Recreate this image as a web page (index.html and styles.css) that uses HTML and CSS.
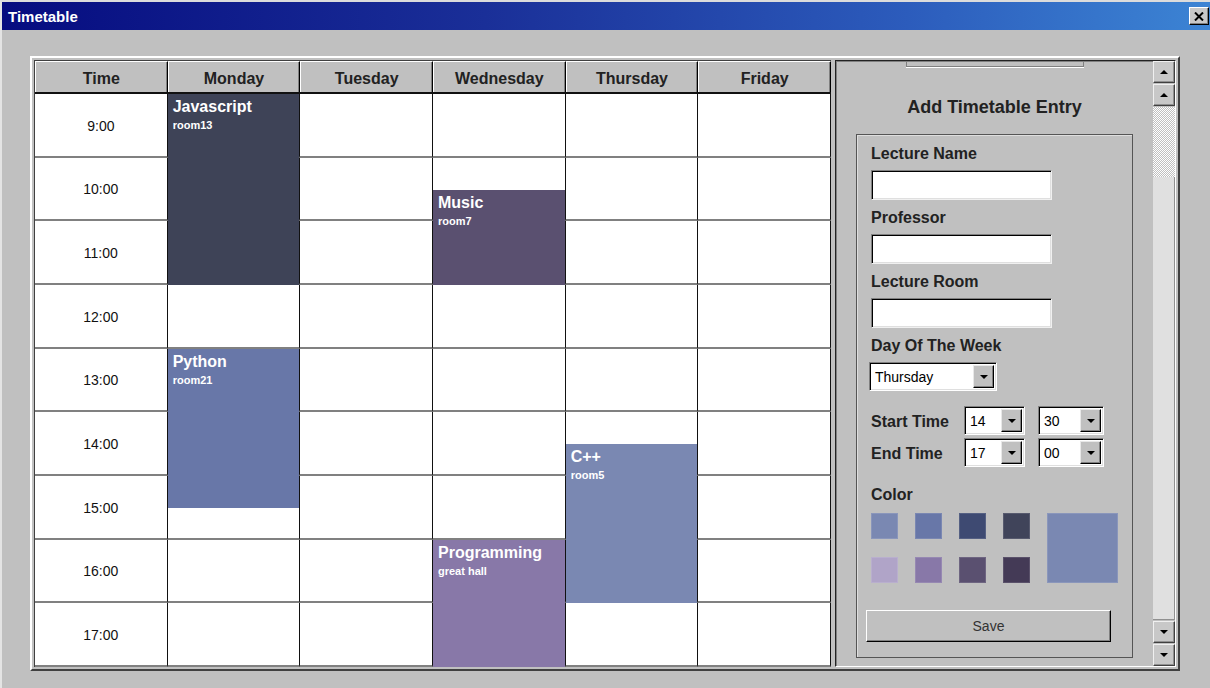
FILE: index.html
```html
<!DOCTYPE html>
<html lang="en">
<head>
    <meta charset="UTF-8">
    <meta name="viewport" content="width=device-width, initial-scale=1.0">
    <title>Timetable</title>
    <link rel="stylesheet" href="styles.css">
</head>
<body>

<div class="window">
    <div class="titlebar">
        <span class="title">Timetable</span>
        <button class="close-btn" aria-label="Close">
            <svg width="10" height="9" viewBox="0 0 10 9"><path d="M1 0.5 L9 8.5 M9 0.5 L1 8.5" stroke="#000" stroke-width="2"/></svg>
        </button>
    </div>

    <div class="client">
        <div class="frame">

            <!-- Tabla del horario -->
            <div class="timetable">
                <div class="head">
                    <div class="head-cell">Time</div>
                    <div class="head-cell">Monday</div>
                    <div class="head-cell">Tuesday</div>
                    <div class="head-cell">Wednesday</div>
                    <div class="head-cell">Thursday</div>
                    <div class="head-cell">Friday</div>
                </div>
                <div class="body">
                    <div class="cells">
                        <div class="cell time">9:00</div><div class="cell"></div><div class="cell"></div><div class="cell"></div><div class="cell"></div><div class="cell"></div>
                        <div class="cell time">10:00</div><div class="cell"></div><div class="cell"></div><div class="cell"></div><div class="cell"></div><div class="cell"></div>
                        <div class="cell time">11:00</div><div class="cell"></div><div class="cell"></div><div class="cell"></div><div class="cell"></div><div class="cell"></div>
                        <div class="cell time">12:00</div><div class="cell"></div><div class="cell"></div><div class="cell"></div><div class="cell"></div><div class="cell"></div>
                        <div class="cell time">13:00</div><div class="cell"></div><div class="cell"></div><div class="cell"></div><div class="cell"></div><div class="cell"></div>
                        <div class="cell time">14:00</div><div class="cell"></div><div class="cell"></div><div class="cell"></div><div class="cell"></div><div class="cell"></div>
                        <div class="cell time">15:00</div><div class="cell"></div><div class="cell"></div><div class="cell"></div><div class="cell"></div><div class="cell"></div>
                        <div class="cell time">16:00</div><div class="cell"></div><div class="cell"></div><div class="cell"></div><div class="cell"></div><div class="cell"></div>
                        <div class="cell time">17:00</div><div class="cell"></div><div class="cell"></div><div class="cell"></div><div class="cell"></div><div class="cell"></div>
                    </div>
                    <div class="events">
                        <div class="event" style="grid-column: 2; grid-row: 1 / 7; background: #3e4357;">
                            <div class="event-name">Javascript</div>
                            <div class="event-room">room13</div>
                        </div>
                        <div class="event" style="grid-column: 4; grid-row: 4 / 7; background: #5a5070;">
                            <div class="event-name">Music</div>
                            <div class="event-room">room7</div>
                        </div>
                        <div class="event" style="grid-column: 2; grid-row: 9 / 14; background: #6877a8;">
                            <div class="event-name">Python</div>
                            <div class="event-room">room21</div>
                        </div>
                        <div class="event" style="grid-column: 5; grid-row: 12 / 17; background: #7a88b2;">
                            <div class="event-name">C++</div>
                            <div class="event-room">room5</div>
                        </div>
                        <div class="event" style="grid-column: 4; grid-row: 15 / 19; background: #8878a8;">
                            <div class="event-name">Programming</div>
                            <div class="event-room">great hall</div>
                        </div>
                    </div>
                </div>
            </div>

            <!-- Panel para agregar entradas -->
            <div class="panel">
                <div class="panel-content">
                    <div class="grip"></div>
                    <h2>Add Timetable Entry</h2>
                    <div class="group">
                        <label class="field-label">Lecture Name</label>
                        <input type="text" class="text-input">

                        <label class="field-label">Professor</label>
                        <input type="text" class="text-input">

                        <label class="field-label">Lecture Room</label>
                        <input type="text" class="text-input">

                        <label class="field-label">Day Of The Week</label>
                        <div class="select day">
                            <span class="select-value">Thursday</span>
                            <span class="drop"><i class="tri-down"></i></span>
                        </div>

                        <div class="time-row first">
                            <span class="time-label">Start Time</span>
                            <div class="select hour">
                                <span class="select-value">14</span>
                                <span class="drop"><i class="tri-down"></i></span>
                            </div>
                            <div class="select minute">
                                <span class="select-value">30</span>
                                <span class="drop"><i class="tri-down"></i></span>
                            </div>
                        </div>
                        <div class="time-row">
                            <span class="time-label">End Time</span>
                            <div class="select hour">
                                <span class="select-value">17</span>
                                <span class="drop"><i class="tri-down"></i></span>
                            </div>
                            <div class="select minute">
                                <span class="select-value">00</span>
                                <span class="drop"><i class="tri-down"></i></span>
                            </div>
                        </div>

                        <label class="field-label color-label">Color</label>
                        <div class="colors">
                            <div class="swatches">
                                <div class="swatch" style="background: #7a88b2;"></div>
                                <div class="swatch" style="background: #6877a8;"></div>
                                <div class="swatch" style="background: #3e4a72;"></div>
                                <div class="swatch" style="background: #40445a;"></div>
                                <div class="swatch" style="background: #b0a4c8;"></div>
                                <div class="swatch" style="background: #8878a8;"></div>
                                <div class="swatch" style="background: #5a5070;"></div>
                                <div class="swatch" style="background: #443a56;"></div>
                            </div>
                            <div class="swatch-big" style="background: #7a88b2;"></div>
                        </div>

                        <button class="save">Save</button>
                    </div>
                </div>
                <div class="scrollbar">
                    <div class="sb-btn"><i class="tri-up"></i></div>
                    <div class="sb-btn"><i class="tri-up"></i></div>
                    <div class="sb-track"></div>
                    <div class="sb-thumb"></div>
                    <div class="sb-btn"><i class="tri-down"></i></div>
                    <div class="sb-btn"><i class="tri-down"></i></div>
                </div>
            </div>

        </div>
    </div>
</div>

</body>
</html>
```

FILE: styles.css
```css
* {
    box-sizing: border-box;
}

body {
    margin: 0;
    padding: 0;
    background-color: #c0c0c0;
    font-family: 'Liberation Sans', Arial, sans-serif;
    color: #222;
}

.window {
    width: 1210px;
    height: 688px;
    display: flex;
    flex-direction: column;
    border-top: 2px solid #dcdcdc;
    border-left: 2px solid #e4e4e4;
    background-color: #c0c0c0;
}

/* Barra de titulo */
.titlebar {
    height: 28px;
    display: flex;
    align-items: center;
    justify-content: space-between;
    padding: 0 1px 0 6px;
    background: linear-gradient(to right, #060c80 0%, #1a2f98 40%, #2c5cbc 75%, #3c84d4 100%);
}

.title {
    color: #fff;
    font-weight: bold;
    font-size: 15px;
}

.close-btn {
    width: 20px;
    height: 18px;
    padding: 0;
    display: flex;
    align-items: center;
    justify-content: center;
    background-color: #c8c8c8;
    border: 1px solid;
    border-color: #fff #000 #000 #fff;
    box-shadow: inset -1px -1px #808080;
}

.client {
    flex: 1;
    padding: 26px 30px 17px 28px;
    display: flex;
}

.frame {
    flex: 1;
    display: flex;
    gap: 4px;
    padding: 2px;
    border: 2px solid;
    border-color: #fff #404040 #404040 #fff;
}

/* Tabla */
.timetable {
    flex: 0 0 797px;
    display: flex;
    flex-direction: column;
    border-top: 1px solid #404040;
    border-left: 1px solid #404040;
}

.head {
    height: 33px;
    display: grid;
    grid-template-columns: repeat(6, 1fr);
    border-bottom: 2px solid #111;
}

.head-cell {
    display: flex;
    align-items: center;
    justify-content: center;
    padding-top: 3px;
    font-size: 16px;
    font-weight: bold;
    color: #222;
    border: 1px solid;
    border-color: #fff #000 #000 #fff;
    border-bottom: none;
    box-shadow: inset -1px 0 #808080;
}

.body {
    flex: 1;
    display: grid;
    background-color: #fff;
}

.cells,
.events {
    grid-area: 1 / 1;
    display: grid;
    grid-template-columns: repeat(6, 1fr);
}

.cells {
    grid-template-rows: repeat(9, 1fr);
}

.events {
    grid-template-rows: repeat(18, 1fr);
}

.cell {
    border-right: 1px solid #111;
    border-bottom: 2px solid #808080;
}

.cell.time {
    display: flex;
    align-items: center;
    justify-content: center;
    padding-top: 2px;
    font-size: 14px;
    color: #111;
}

.event {
    margin-right: 1px;
    padding: 4px 5px;
    color: #fff;
}

.event-name {
    font-size: 16px;
    line-height: 18px;
    font-weight: bold;
}

.event-room {
    margin-top: 2px;
    font-size: 11px;
    line-height: 14px;
    font-weight: bold;
}

/* Panel derecho */
.panel {
    flex: 1;
    display: flex;
    border: 1px solid;
    border-color: #222 #fff #fff #222;
    box-shadow: inset 1px 1px #808080;
}

.panel-content {
    flex: 1;
    display: flex;
    flex-direction: column;
}

.grip {
    width: 178px;
    height: 6px;
    margin: 0 auto;
    border: 1px solid #808080;
    border-top: none;
    box-shadow: 0 1px #fff;
}

.panel-content h2 {
    margin: 29px 0 16px;
    text-align: center;
    font-size: 18px;
    line-height: 22px;
    color: #222;
}

.group {
    margin: 0 20px;
    padding: 10px 14px 15px;
    border: 1px solid #555;
    box-shadow: inset 1px 1px #dedede;
    display: flex;
    flex-direction: column;
    align-items: flex-start;
}

.field-label {
    display: block;
    font-size: 16px;
    line-height: 18px;
    font-weight: bold;
    color: #222;
}

.text-input + .field-label {
    margin-top: 9px;
}

.text-input {
    width: 181px;
    height: 30px;
    margin: 7px 0 0;
    padding: 0 4px;
    background-color: #fff;
    border: 1px solid;
    border-color: #808080 #f0f0f0 #f0f0f0 #808080;
    box-shadow: inset 1px 1px #000, inset -1px -1px #dfdfdf;
    outline: none;
}

.select {
    display: flex;
    align-items: stretch;
    background-color: #fff;
    border: 1px solid;
    border-color: #808080 #fff #fff #808080;
    box-shadow: inset 1px 1px #000, inset -1px -1px #dfdfdf;
    padding: 2px;
}

.select.day {
    width: 128px;
    height: 29px;
    margin: 7px 0 0 -2px;
}

.select-value {
    flex: 1;
    display: flex;
    align-items: center;
    padding-left: 3px;
    font-size: 14px;
    color: #000;
}

.drop {
    width: 21px;
    display: flex;
    align-items: center;
    justify-content: center;
    background-color: #c0c0c0;
    border: 1px solid;
    border-color: #e8e8e8 #000 #000 #e8e8e8;
    box-shadow: inset -1px -1px #808080;
}

.tri-down,
.tri-up {
    width: 0;
    height: 0;
    border-left: 4px solid transparent;
    border-right: 4px solid transparent;
}

.tri-down {
    border-top: 4px solid #000;
}

.tri-up {
    border-bottom: 4px solid #000;
}

.time-row {
    display: flex;
    align-items: center;
    margin-top: 3px;
}

.time-row.first {
    margin-top: 15px;
}

.time-label {
    width: 93px;
    padding-top: 2px;
    font-size: 16px;
    font-weight: bold;
    color: #222;
}

.select.hour {
    width: 61px;
    height: 29px;
}

.select.minute {
    width: 66px;
    height: 29px;
    margin-left: 13px;
}

.color-label {
    margin-top: 19px;
}

.colors {
    display: flex;
    gap: 17px;
    margin-top: 9px;
}

.swatches {
    display: grid;
    grid-template-columns: repeat(4, 27px);
    grid-auto-rows: 26px;
    column-gap: 17px;
    row-gap: 18px;
}

.swatch,
.swatch-big {
    box-shadow: inset 0 0 0 1px rgba(255, 255, 255, 0.12);
}

.swatch-big {
    width: 71px;
    height: 70px;
}

.save {
    width: 245px;
    height: 32px;
    margin: 27px 0 0 -5px;
    background-color: #c0c0c0;
    border: 1px solid;
    border-color: #fff #000 #000 #fff;
    box-shadow: inset -1px -1px #808080;
    font-family: 'Liberation Sans', Arial, sans-serif;
    font-size: 14px;
    color: #333;
}

/* Barra de desplazamiento */
.scrollbar {
    width: 22px;
    display: flex;
    flex-direction: column;
}

.sb-btn {
    height: 22px;
    margin-bottom: 1px;
    display: flex;
    align-items: center;
    justify-content: center;
    background-color: #c8c8c8;
    border: 1px solid;
    border-color: #f0f0f0 #404040 #404040 #f0f0f0;
    box-shadow: inset -1px -1px #909090;
}

.sb-btn:last-child {
    margin-bottom: 0;
}

.sb-track {
    height: 70px;
    background-color: #fff;
    background-image: repeating-conic-gradient(#c0c0c0 0 25%, #fff 0 50%);
    background-size: 2px 2px;
}

.sb-thumb {
    flex: 1;
    margin-bottom: 1px;
    background-color: #e0e0e0;
    border-right: 1px solid #909090;
    border-bottom: 1px solid #909090;
}
```
